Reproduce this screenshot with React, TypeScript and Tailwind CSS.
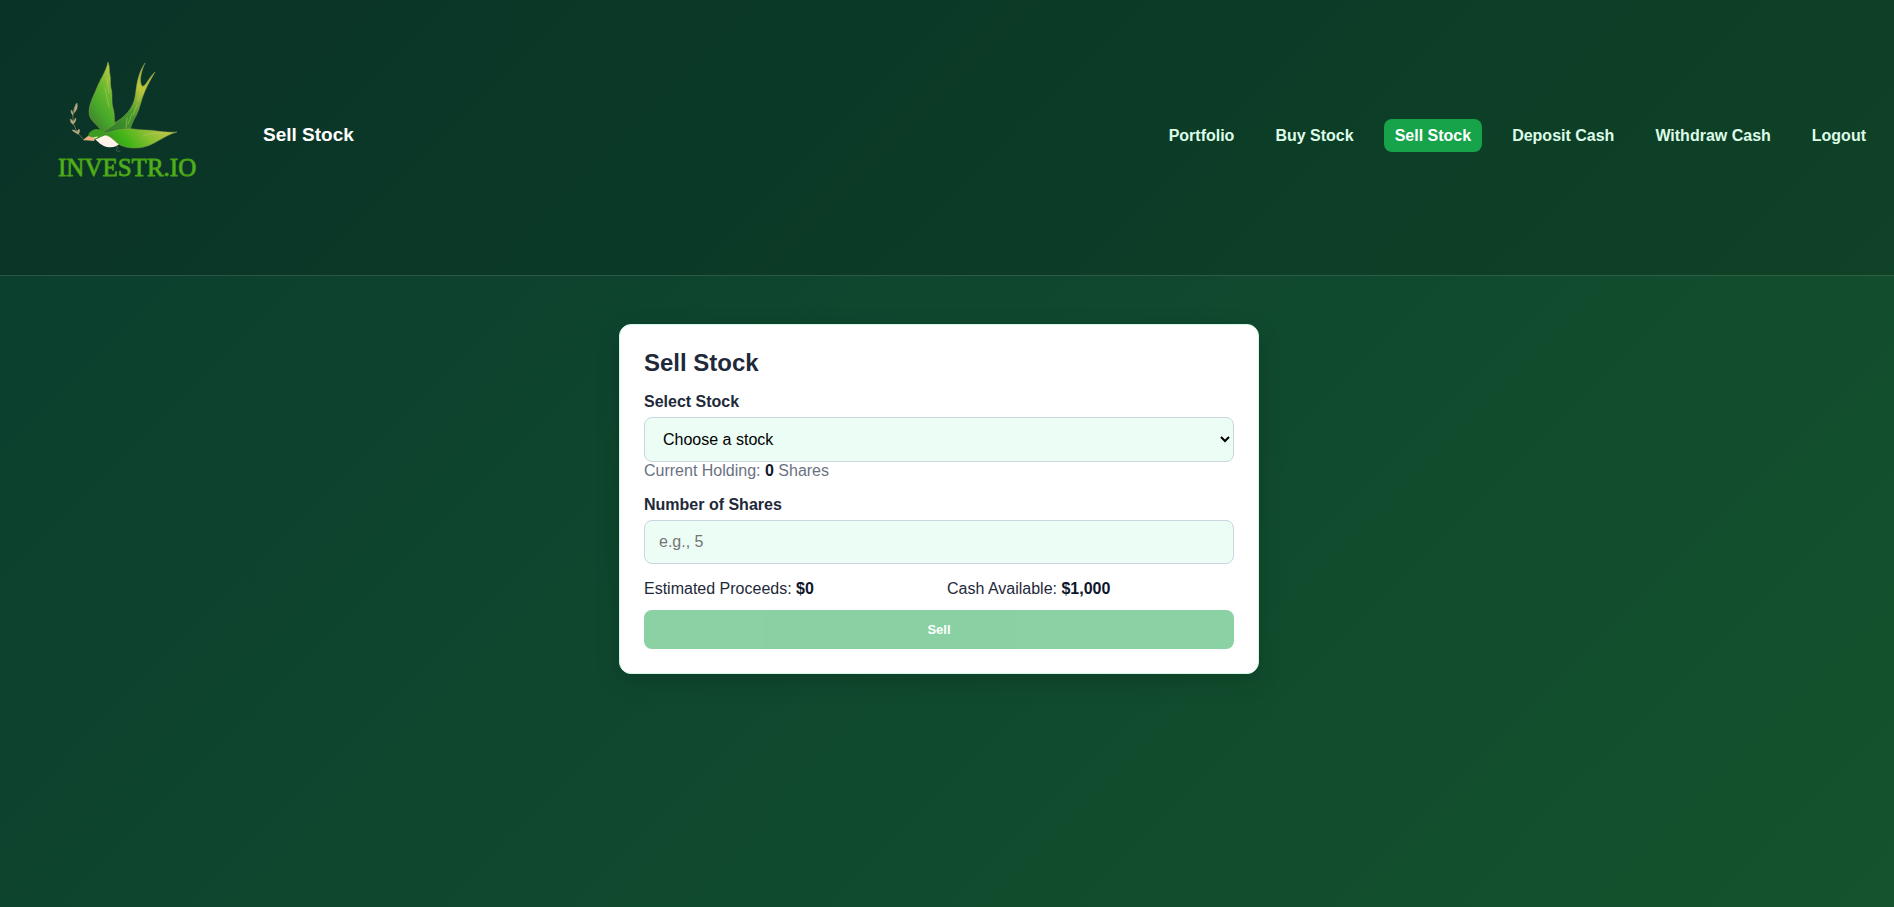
import { useState } from "react";

const links = ["Portfolio", "Buy Stock", "Sell Stock", "Deposit Cash", "Withdraw Cash", "Logout"];

function Logo() {
  return (
    <svg viewBox="0 0 170 140" className="h-[140px] w-[170px]" role="img" aria-label="Investr.io">
      <defs>
        <linearGradient id="wing" x1="0.3" y1="1" x2="0.8" y2="0">
          <stop offset="0" stopColor="#3f7f2c" />
          <stop offset="0.3" stopColor="#48a82a" />
          <stop offset="0.6" stopColor="#66b82c" />
          <stop offset="1" stopColor="#c5cf42" />
        </linearGradient>
        <linearGradient id="tail" x1="0.2" y1="1" x2="0.8" y2="0">
          <stop offset="0" stopColor="#2f7a2a" />
          <stop offset="0.4" stopColor="#459a2c" />
          <stop offset="0.72" stopColor="#bcc63c" />
          <stop offset="1" stopColor="#a9b83c" />
        </linearGradient>
        <linearGradient id="side" x1="0" y1="0.5" x2="1" y2="0.3">
          <stop offset="0" stopColor="#3f8f2a" />
          <stop offset="0.25" stopColor="#3bb315" />
          <stop offset="0.6" stopColor="#86bf30" />
          <stop offset="1" stopColor="#c9c94a" />
        </linearGradient>
      </defs>
      <g strokeLinejoin="round" strokeLinecap="round">
        <path d="M61 82C65 79 69 76 74 73C84 68 91 60 94 51C97 42 95 28 105 13C101 22 99 31 102 36C105 38 109 27 115 22C111 29 108 34 105 41C101 50 100 58 96 66C93 71 91 75 90 81C80 90 70 90 61 82Z" fill="url(#tail)" stroke="#8f9c4c" strokeWidth="0.5" />
        <path d="M62 82C60 77 52 72 50 67C47 59 52 49 56 40C60 29 66 22 68 12C70 17 69 20 70 25C71 29 70 34 71 38C73 44 71 51 73 58C75 64 74 70 75 74C70 77 66 81 62 82Z" fill="url(#wing)" stroke="#8f9c4c" strokeWidth="0.5" />
        <path d="M54 88C58 84 65 82 70 84L80 93C77 97 72 98 67 97C62 96 58 92 54 88Z" fill="#fff3ea" />
        <path d="M63 83C71 83 76 79 85 79C92 78 98 80 105 80C114 80 124 83 137 82C126 85 119 91 110 95C101 99 88 99 80 95C75 92 72 87 66 85Z" fill="url(#side)" stroke="#8f9c4c" strokeWidth="0.5" />
        <path d="M48 87C48 82 53 79 57 79C62 79 65 82 69 85C64 85 61 87 57 89C53 90 50 88 48 87Z" fill="#3c9b20" />
        <path d="M48 86L43 90L54 91L55 88Z" fill="#edb183" />
        <path d="M54 88L57 87" stroke="#f3f7df" strokeWidth="1.2" fill="none" />
        <path d="M65 38C66 45 68 50 69 57M67 28L69 43M92 64L88 74M97 55L93 65M101 42L98 51M103 86C110 83 119 83 127 83M87 68L86 78" fill="none" stroke="#c7c86a" strokeWidth="0.5" />
        <path d="M76 97C79 96 79 98 76 100C77 102 78 101 80 101" fill="none" stroke="#5c654b" strokeWidth="0.8" />
        <path d="M45 91C38 84 33 77 33 68C32 62 35 57 36 54" fill="none" stroke="#8f8963" strokeWidth="0.7" />
        <path d="M34 63C34 59 35 56 37 53C38 57 37 60 34 63M33 65C31 64 31 62 31 60C33 61 33 63 33 65M33 74C30 73 31 71 30 69C33 70 34 72 33 74M33 74C35 73 36 71 36 68C34 70 33 71 33 74M38 84C35 83 33 81 32 80C36 80 38 82 38 84M38 84C40 83 40 80 39 79C37 81 37 82 38 84" fill="#b5aa80" stroke="#b5aa80" strokeWidth="0.4" />
      </g>
      <text x="18" y="126" fontFamily="'Liberation Serif', serif" fontSize="25" fill="#57b51f" stroke="#47a014" strokeWidth="0.9">INVESTR.IO</text>
    </svg>
  );
}

export default function App() {
  const [stock, setStock] = useState("");
  const [shares, setShares] = useState("");
  return (
    <div className="min-h-screen bg-linear-135 from-[#0b3d2e] to-[#14532d] font-['Liberation_Sans',sans-serif] text-base text-gray-800">
      <header className="flex items-center justify-between border-b border-white/15 bg-black/15 pt-[50px] pr-[17px] pb-[55px] pl-10">
        <div className="flex items-center gap-[53px]">
          <div className="pb-[30px]">
            <Logo />
          </div>
          <h1 className="text-[19px] leading-6 font-bold text-white">Sell Stock</h1>
        </div>
        <nav className="flex gap-[19px]">
          {links.map((l) => (
            <a
              key={l}
              href="#"
              aria-current={l === "Sell Stock" ? "page" : undefined}
              className={
                l === "Sell Stock"
                  ? "rounded-lg bg-[#16a34a] px-[11px] py-[7px] leading-[19px] font-bold text-white"
                  : "rounded-lg px-[11px] py-[7px] leading-[19px] font-bold text-[#dcfce7]"
              }
            >
              {l}
            </a>
          ))}
        </nav>
      </header>
      <main className="flex justify-center py-12 pr-4">
        <form
          onSubmit={(e) => e.preventDefault()}
          className="flex w-full max-w-[640px] flex-col rounded-xl border border-[#d1fae5] bg-white p-6 shadow-[0_8px_24px_rgba(0,0,0,0.15)]"
        >
          <h2 className="mb-4 text-2xl leading-7 font-bold">Sell Stock</h2>
          <label htmlFor="stock" className="mb-1.5 leading-[18px] font-bold">
            Select Stock
          </label>
          <select
            id="stock"
            value={stock}
            onChange={(e) => setStock(e.target.value)}
            className="h-[45px] rounded-lg border border-slate-300 bg-[#ecfdf5] px-3.5 text-black"
          >
            <option value="">Choose a stock</option>
          </select>
          <p className="mb-4 leading-[18px] text-gray-500">
            Current Holding: <strong className="text-slate-900">0</strong> Shares
          </p>
          <label htmlFor="shares" className="mb-1.5 leading-[18px] font-bold">
            Number of Shares
          </label>
          <input
            id="shares"
            inputMode="numeric"
            placeholder="e.g., 5"
            value={shares}
            onChange={(e) => setShares(e.target.value)}
            className="h-11 rounded-lg border border-slate-300 bg-[#ecfdf5] px-3.5 placeholder:text-[#757575]"
          />
          <div className="mt-4 mb-3 grid grid-cols-2 gap-4 leading-[18px]">
            <p>
              Estimated Proceeds: <strong className="text-slate-900">$0</strong>
            </p>
            <p>
              Cash Available: <strong className="text-slate-900">$1,000</strong>
            </p>
          </div>
          <button type="submit" disabled className="h-[39px] rounded-lg bg-[#16a34a] text-[13px] font-bold text-white opacity-50">
            Sell
          </button>
        </form>
      </main>
    </div>
  );
}
